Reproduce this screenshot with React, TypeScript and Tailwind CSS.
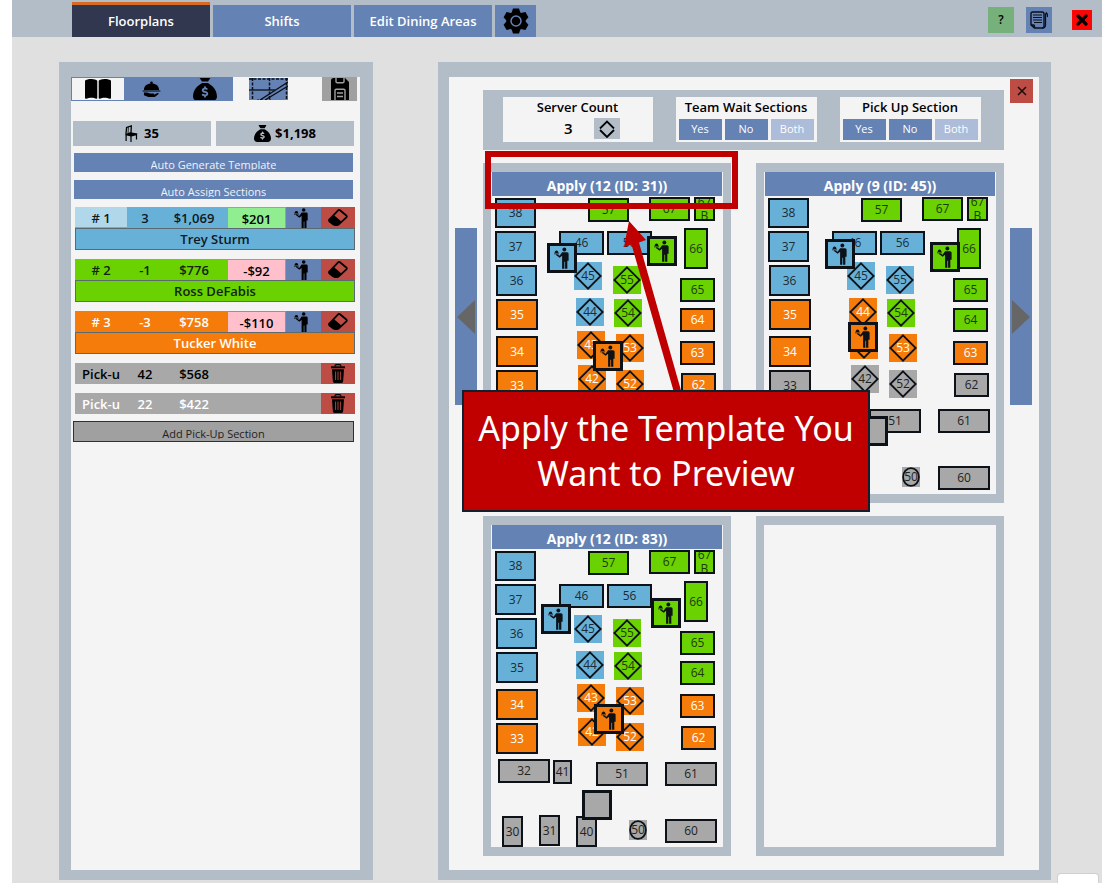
import { useState } from "react";
import type { ReactNode } from "react";
import { FaBookOpen, FaSackDollar, FaXmark } from "react-icons/fa6";

type Fill = "blue" | "green" | "orange" | "gray";
type Shape = "rect" | "diamond" | "oval";

const FILLS: Record<Fill, string> = {
  blue: "bg-[#67b1d9] text-[#1c2b33]",
  green: "bg-[#69d200] text-[#1d3a0c]",
  orange: "bg-[#f57c0a] text-white",
  gray: "bg-[#a8a8a8] text-[#222222]",
};

function Waiter({ className }: { className: string }) {
  return (
    <svg viewBox="0 0 15 20" className={className} fill="currentColor" aria-hidden="true">
      <circle cx="9.7" cy="2" r="1.8" />
      <path d="M7.600 4.500h4.600c1 0 1.500.7 1.500 1.700v6.400h-1.200V20h-2.100v-6.400h-.7V20H7.600V8L5.300 9.800 1.800 7.100l.7-.8L5.200 8z" />
      <path d="M0 5.700h4.800v.7H0zM.6 5.300C.6 3.800 1.400 3 2.400 3s1.800.8 1.800 2.300z" />
    </svg>
  );
}

function Gear() {
  const teeth = [0, 60, 120, 180, 240, 300];
  return (
    <svg viewBox="-13 -13 26 26" className="size-[26px]" aria-hidden="true">
      {teeth.map((a) => (
        <path key={a} d="M-4.500 -8-3-12.600H3L4.500 -8z" transform={`rotate(${a})`} />
      ))}
      <circle r="9.6" />
      <circle r="5" fill="none" stroke="#6582b4" strokeWidth="1.500" />
    </svg>
  );
}

function Cloche() {
  return (
    <svg viewBox="0 0 20 18" className="h-[17px] w-[19px]" aria-hidden="true">
      <circle cx="10" cy="1.800" r="1.400" />
      <path d="M2 9.500C2 5 5.500 2.700 10 2.700S18 5 18 9.500zM.6 10h18.800v1.200H.6z" />
      <path d="M2 12.200h3.500l3 1.100h3.600c1 0 1.100 1.200.1 1.200H9l3.600.1 3.600-1.900c1.200-.5 2 .6 1 1.400L13.500 17H6.700L2 15.200z" />
    </svg>
  );
}

function MapIcon() {
  return (
    <svg viewBox="0 0 39 22" className="h-[22px] w-[39px] bg-[#6582b4]" fill="none" stroke="#0b0f1a" aria-hidden="true">
      <path d="M0 1h39M3.500 0v22M20.500 0v22M37.500 0v22" strokeWidth="1.500" strokeDasharray="3 1.500" />
      <path d="M0 12h26" strokeWidth="1.300" />
      <path d="M11 22 39 4M16 22 39 8" strokeWidth="1.400" />
      <path d="M8 22h16" strokeWidth="1" strokeDasharray="2 2" />
    </svg>
  );
}

function Floppy() {
  return (
    <svg viewBox="0 0 20 22" className="h-[22px] w-5" aria-hidden="true">
      <path d="M1 2.500C1 1 2 0 3.500 0H15l4 4v18H1z" />
      <path d="M6 0v3.500c0 .8.5 1.200 1.200 1.200h5.600c.7 0 1.200-.4 1.200-1.200V0M5 22v-9.500c0-.8.500-1.200 1.200-1.200h7.600c.7 0 1.200.4 1.200 1.200V22M7 15h6M7 18.500h6" fill="none" stroke="#a0a0a0" strokeWidth="1.400" />
    </svg>
  );
}

function Chair() {
  return (
    <svg viewBox="0 0 13 17" className="h-[17px] w-[13px]" aria-hidden="true">
      <path d="M.9 9.500 1.600 2.400 6.300.9 6 8" fill="none" stroke="#000" strokeWidth="1.300" />
      <path d="M3.400 2.200 3 9" stroke="#000" strokeWidth=".8" />
      <path d="M.4 9.300 5 7.200l7.600 1.300-1.200 1.700-5 1.400L.6 10.200z" />
      <path d="M1.100 10v6M6 10.500V17M11.500 9v5.500" stroke="#000" strokeWidth="1.200" />
    </svg>
  );
}

function Eraser() {
  return (
    <svg viewBox="0 0 20 17" className="h-[17px] w-5" aria-hidden="true">
      <path d="M12 1.300 18.300 6.500c.6.5.7 1.200.1 1.800l-7.600 7c-.6.6-1.300.7-2.100.7H6.800c-.7 0-1.200-.2-1.700-.6L1.600 12.500c-.8-.7-.8-1.500 0-2.200l8.500-8.900c.6-.6 1.300-.6 1.900-.1z" fill="none" stroke="#000" strokeWidth="1.800" />
      <path d="m5.800 5.900 7.600 6.700-3.200 3.400H6L1 11.800v-1z" />
    </svg>
  );
}

function Trash() {
  return (
    <svg viewBox="0 0 16 19" className="h-[19px] w-4" aria-hidden="true">
      <path d="M1 2.300h14v2H1z" />
      <path d="M5 2.500C5 1 5.500.7 6.500.7h3c1 0 1.500.3 1.500 1.800" fill="none" stroke="#000" strokeWidth="1.200" />
      <path d="M2 5.300h12L13.200 17c-.1 1.200-.7 2-1.800 2H4.600c-1.100 0-1.700-.8-1.800-2z" />
      <path d="M5.600 7.500v8.500M8 7.500v8.500M10.400 7.500v8.500" stroke="#bd4d44" strokeWidth=".9" />
    </svg>
  );
}

function Notes() {
  return (
    <svg viewBox="0 0 18 18" className="size-[18px]" fill="none" stroke="#0b0f1a" strokeWidth="1.400" aria-hidden="true">
      <path d="M2.500 1H12c1.200 0 2 .8 2 2v12c0 1.200-.8 2-2 2H4.500L1 14V2.500C1 1.600 1.600 1 2.500 1zM1 14h2.500c.7 0 1 .4 1 1v2" />
      <path d="M3 4h9M3 6.500h9M3 9h9M4 11.500h8" strokeWidth="1.200" />
      <path d="M12 17c2.500 0 3.500-1 3.500-3V3.500L16.300 2l1.200 1.500V6" strokeWidth="1.300" />
    </svg>
  );
}

interface TableSpec {
  id: string;
  x: number;
  y: number;
  w: number;
  h: number;
  shape?: Shape;
}

const TABLES: TableSpec[] = [
  { id: "38", x: 4, y: 2, w: 41, h: 30 },
  { id: "37", x: 4, y: 35, w: 41, h: 31 },
  { id: "36", x: 5, y: 69, w: 41, h: 31 },
  { id: "35", x: 5, y: 103, w: 42, h: 31 },
  { id: "34", x: 5, y: 140, w: 42, h: 31 },
  { id: "33", x: 5, y: 174, w: 42, h: 31 },
  { id: "57", x: 97, y: 2, w: 41, h: 24 },
  { id: "67", x: 158, y: 1, w: 41, h: 24 },
  { id: "67 B", x: 203, y: 1, w: 21, h: 24 },
  { id: "46", x: 68, y: 35, w: 45, h: 24 },
  { id: "56", x: 116, y: 35, w: 45, h: 24 },
  { id: "66", x: 193, y: 32, w: 24, h: 41 },
  { id: "65", x: 189, y: 82, w: 35, h: 24 },
  { id: "64", x: 189, y: 112, w: 35, h: 24 },
  { id: "63", x: 189, y: 145, w: 35, h: 24 },
  { id: "62", x: 190, y: 177, w: 35, h: 24 },
  { id: "45", x: 83, y: 66, w: 28, h: 28, shape: "diamond" },
  { id: "55", x: 122, y: 70, w: 28, h: 28, shape: "diamond" },
  { id: "44", x: 85, y: 102, w: 28, h: 28, shape: "diamond" },
  { id: "54", x: 123, y: 103, w: 28, h: 28, shape: "diamond" },
  { id: "43", x: 86, y: 135, w: 28, h: 28, shape: "diamond" },
  { id: "42", x: 87, y: 169, w: 28, h: 28, shape: "diamond" },
  { id: "53", x: 125, y: 138, w: 28, h: 28, shape: "diamond" },
  { id: "52", x: 125, y: 174, w: 28, h: 28, shape: "diamond" },
  { id: "32", x: 7, y: 210, w: 52, h: 24 },
  { id: "41", x: 62, y: 211, w: 19, h: 24 },
  { id: "51", x: 105, y: 213, w: 52, h: 24 },
  { id: "61", x: 174, y: 213, w: 52, h: 24 },
  { id: "30", x: 11, y: 267, w: 21, h: 31 },
  { id: "31", x: 48, y: 266, w: 21, h: 31 },
  { id: "40", x: 85, y: 267, w: 21, h: 31 },
  { id: "50", x: 138, y: 271, w: 18, h: 20, shape: "oval" },
  { id: "60", x: 174, y: 270, w: 52, h: 24 },
];

interface Template {
  title: string;
  sections: Partial<Record<Fill, string[]>>;
  servers: { x: number; y: number; fill: Fill }[];
}

const TEMPLATES: Template[] = [
  {
    title: "Apply (12 (ID: 31))",
    sections: {
      blue: ["38", "37", "36", "46", "56", "45", "44"],
      green: ["57", "67", "67 B", "66", "65", "55", "54"],
      orange: ["35", "34", "33", "64", "63", "62", "43", "42", "53", "52"],
    },
    servers: [
      { x: 56, y: 47, fill: "blue" },
      { x: 156, y: 40, fill: "green" },
      { x: 102, y: 145, fill: "orange" },
      { x: 91, y: 241, fill: "gray" },
    ],
  },
  {
    title: "Apply (9 (ID: 45))",
    sections: {
      blue: ["38", "37", "36", "46", "56", "45", "55"],
      green: ["57", "67", "67 B", "66", "65", "64", "54"],
      orange: ["35", "34", "63", "44", "43", "53"],
    },
    servers: [
      { x: 61, y: 43, fill: "blue" },
      { x: 166, y: 46, fill: "green" },
      { x: 84, y: 126, fill: "orange" },
      { x: 94, y: 220, fill: "gray" },
    ],
  },
  {
    title: "Apply (12 (ID: 83))",
    sections: {
      blue: ["38", "37", "36", "35", "46", "56", "45", "44"],
      green: ["57", "67", "67 B", "66", "65", "64", "55", "54"],
      orange: ["34", "33", "63", "62", "43", "42", "53", "52"],
    },
    servers: [
      { x: 50, y: 55, fill: "blue" },
      { x: 160, y: 49, fill: "green" },
      { x: 103, y: 155, fill: "orange" },
      { x: 91, y: 241, fill: "gray" },
    ],
  },
];

function fillFor(t: Template, id: string): Fill {
  const order: Fill[] = ["blue", "green", "orange"];
  return order.find((f) => t.sections[f]?.includes(id)) ?? "gray";
}

function FloorTable({ spec, fill }: { spec: TableSpec; fill: Fill }) {
  const shape = spec.shape ?? "rect";
  return (
    <div
      className={`absolute flex items-center justify-center overflow-hidden text-center text-xs leading-[14px] ${FILLS[fill]} ${shape === "rect" ? "border-2 border-[#0c1218]" : ""}`}
      style={{ left: spec.x, top: spec.y, width: spec.w, height: spec.h }}
    >
      {shape === "diamond" && (
        <svg viewBox="0 0 28 28" className="absolute inset-0 size-full" fill="none" stroke="#0c1218" strokeWidth="1.800" aria-hidden="true">
          <path d="M14 1.300 26.700 14 14 26.700 1.300 14z" />
        </svg>
      )}
      {shape === "oval" && (
        <svg viewBox="0 0 18 20" className="absolute inset-0 size-full" fill="none" stroke="#0c1218" strokeWidth="1.800" aria-hidden="true">
          <ellipse cx="9" cy="10" rx="7.900" ry="8.900" />
        </svg>
      )}
      <span>{spec.id}</span>
    </div>
  );
}

function TemplateCard({ template }: { template?: Template }) {
  return (
    <section className="h-[340px] border-x-8 border-y-9 border-[#b2bdc8] bg-[#f4f4f4]">
      {template && (
        <>
          <button className="mx-px flex h-6 w-[230px] items-center justify-center bg-[#6582b4] pt-1 text-sm leading-5 font-bold text-white">
            {template.title}
          </button>
          <div className="relative h-[298px]">
            {TABLES.map((s) => (
              <FloorTable key={s.id} spec={s} fill={fillFor(template, s.id)} />
            ))}
            {template.servers.map((s) => (
              <div
                key={s.fill}
                className={`absolute flex size-[30px] items-center justify-center border-3 border-[#0c1218] ${FILLS[s.fill]}`}
                style={{ left: s.x, top: s.y }}
              >
                {s.fill !== "gray" && <Waiter className="h-[22px] w-4 text-[#0c1218]" />}
              </div>
            ))}
          </div>
        </>
      )}
    </section>
  );
}

function Choice({ title, width }: { title: string; width: string }) {
  return (
    <fieldset className={`h-[45px] bg-[#f4f4f4] px-[3px] ${width}`}>
      <legend className="sr-only">{title}</legend>
      <div className="h-[22px] text-center text-[13px] leading-[21px] font-semibold">{title}</div>
      <div className="flex gap-[3px] text-[11px] text-white">
        <button className="h-[21px] flex-1 bg-[#6582b4]">Yes</button>
        <button className="h-[21px] flex-1 bg-[#6582b4]">No</button>
        <button className="h-[21px] flex-1 bg-[#adbcd8]">Both</button>
      </div>
    </fieldset>
  );
}

function ClippedButton({ children, className }: { children: ReactNode; className: string }) {
  return (
    <button className={`flex items-start justify-center pt-0.5 ${className}`}>
      <span className="h-[15px] overflow-hidden leading-5">{children}</span>
    </button>
  );
}

interface SectionInfo {
  label: string;
  diff: string;
  sales: string;
  delta: string;
  name: string;
  fill: string;
  labelFill: string;
  deltaFill: string;
}

const SECTIONS: SectionInfo[] = [
  { label: "# 1", diff: "3", sales: "$1,069", delta: "$201", name: "Trey Sturm", fill: "bg-[#67b1d9] text-[#101820]", labelFill: "bg-[#b0d7ea]", deltaFill: "bg-[#90ee90]" },
  { label: "# 2", diff: "-1", sales: "$776", delta: "-$92", name: "Ross DeFabis", fill: "bg-[#69d200] text-[#12240a]", labelFill: "", deltaFill: "bg-[#ffc0cb]" },
  { label: "# 3", diff: "-3", sales: "$758", delta: "-$110", name: "Tucker White", fill: "bg-[#f57c0a] text-white", labelFill: "", deltaFill: "bg-[#ffc0cb]" },
];

function SectionRow({ s }: { s: SectionInfo }) {
  return (
    <div className={`text-center text-[13px] font-semibold ${s.fill}`}>
      <div className="flex h-[21px] leading-[22px]">
        <span className={`mb-px w-[52px] ${s.labelFill}`}>{s.label}</span>
        <span className="w-9">{s.diff}</span>
        <span className="w-[62px]">{s.sales}</span>
        <span className={`mt-px mr-px ml-auto w-[57px] text-black ${s.deltaFill}`}>{s.delta}</span>
        <button aria-label={`Servers for ${s.name}`} className="flex w-[35px] items-center justify-center bg-[#6582b4] pr-1 text-black">
          <Waiter className="h-5 w-[15px]" />
        </button>
        <button aria-label={`Clear ${s.name}`} className="flex w-[34px] items-center justify-center bg-[#bd4d44]">
          <Eraser />
        </button>
      </div>
      <div className="h-[22px] border border-[#5c6a70] leading-[21px]">{s.name}</div>
    </div>
  );
}

function PickupRow({ count, sales, tone }: { count: string; sales: string; tone: string }) {
  return (
    <div className={`flex h-[21px] bg-[#a8a8a8] text-center text-[13px] leading-[22px] font-semibold ${tone}`}>
      <span className="w-[52px] whitespace-nowrap">Pick-u</span>
      <span className="w-9">{count}</span>
      <span className="w-[62px]">{sales}</span>
      <button aria-label={`Delete pick-up section ${count}`} className="ml-auto flex w-[34px] items-center justify-center bg-[#bd4d44]">
        <Trash />
      </button>
    </div>
  );
}

function Header() {
  return (
    <header className="flex h-[37px] items-end justify-between bg-[#b2bdc8] pr-2.5 pl-[60px]">
      <nav className="flex items-end gap-[3px] text-[13px] font-semibold text-white">
        <button className="h-[35px] w-[138px] border-t-3 border-[#d96a24] bg-[#30374f] pt-0.5">Floorplans</button>
        <button className="h-8 w-[138px] bg-[#6582b4] pt-0.5">Shifts</button>
        <button className="h-8 w-[138px] bg-[#6582b4] pt-0.5">Edit Dining Areas</button>
        <button aria-label="Settings" className="flex h-8 w-[41px] items-center justify-center bg-[#6582b4]">
          <Gear />
        </button>
      </nav>
      <div className="flex items-center self-center pt-[3px]">
        <button aria-label="Help" className="size-[26px] bg-[#76b07a] text-xs font-semibold">?</button>
        <button aria-label="Notes" className="ml-3 flex size-[26px] items-center justify-center bg-[#6582b4]">
          <Notes />
        </button>
        <button aria-label="Close" className="ml-5 flex size-5 items-center justify-center bg-[#fb0505]">
          <FaXmark className="size-4" strokeWidth={40} stroke="black" />
        </button>
      </div>
    </header>
  );
}

function LeftPanel() {
  return (
    <aside className="w-[314px] shrink-0 border-t-15 border-r-13 border-b-10 border-l-12 border-[#b2bdc8] bg-[#f4f4f4]">
      <div className="flex h-6 items-start">
        <div className="flex h-6 border border-[#6582b4]">
          <button aria-label="Overview" className="flex w-[52px] items-center justify-center">
            <FaBookOpen className="size-[26px]" />
          </button>
          <button aria-label="Service" className="flex w-[54px] items-center justify-center bg-[#6582b4]">
            <Cloche />
          </button>
          <button aria-label="Sales" className="flex w-[54px] items-center justify-center overflow-hidden bg-[#6582b4]">
            <FaSackDollar className="size-6 shrink-0" />
          </button>
        </div>
        <button aria-label="Section lines" className="mx-4 mt-px">
          <MapIcon />
        </button>
        <button aria-label="Save" className="mr-[3px] ml-auto flex h-6 w-[35px] items-center justify-center bg-[#a0a0a0]">
          <Floppy />
        </button>
      </div>

      <div className="mt-5 mr-1.5 ml-0.5 flex gap-[5px] text-[13px] font-bold">
        <div className="flex h-[25px] flex-1 items-center justify-center gap-1.5 bg-[#b2bdc8]">
          <Chair /> 35
        </div>
        <div className="flex h-[25px] flex-1 items-center justify-center gap-1 bg-[#b2bdc8]">
          <FaSackDollar className="size-[17px]" /> $1,198
        </div>
      </div>
      <div className="mt-[7px] mr-[7px] ml-[3px] flex flex-col gap-2 text-[11px]">
        <ClippedButton className="h-[19px] bg-[#6582b4] text-[#eef2fa]">Auto Generate Template</ClippedButton>
        <ClippedButton className="h-[19px] bg-[#6582b4] text-[#eef2fa]">Auto Assign Sections</ClippedButton>
      </div>
      <div className="mt-2 mr-[5px] ml-1 flex flex-col gap-[9px]">
        {SECTIONS.map((s) => (
          <SectionRow key={s.label} s={s} />
        ))}
        <PickupRow count="42" sales="$568" tone="text-black" />
        <PickupRow count="22" sales="$422" tone="text-white" />
      </div>
      <ClippedButton className="mt-[7px] ml-0.5 h-[21px] w-[281px] border border-[#303030] bg-[#a0a0a0] text-[11px] text-[#222222]">
        Add Pick-Up Section
      </ClippedButton>
    </aside>
  );
}

function NavButton({ side }: { side: "left" | "right" }) {
  return (
    <button
      aria-label={side === "left" ? "Previous templates" : "Next templates"}
      className="flex h-[177px] w-[22px] items-center justify-center bg-[#6582b4]"
    >
      <svg viewBox="0 0 18 34" className="h-[34px] w-[18px]" fill="#666" aria-hidden="true">
        <path d={side === "left" ? "M18 0v34L0 17z" : "M0 0v34l18-17z"} />
      </svg>
    </button>
  );
}

function Annotation() {
  return (
    <>
      <div className="absolute -top-3 left-0.5 h-[58px] w-[253px] border-6 border-[#c00000]" />
      <svg viewBox="0 0 60 175" className="absolute top-[58px] left-[141px] h-[175px] w-[60px]" fill="#c00000" aria-hidden="true">
        <path d="M5 0 0 26l7.500-2.500L51 175l7-2L15 21.500l7-2.500z" />
      </svg>
      <div className="absolute top-[227px] -left-[21px] flex h-[122px] w-[408px] items-center justify-center border-2 border-[#10202c] bg-[#c00000] text-center font-['Noto_Sans',sans-serif] text-[34px] leading-[45px] text-white">
        <p className="whitespace-nowrap">
          Apply the Template You
          <br />
          Want to Preview
        </p>
      </div>
    </>
  );
}

function TemplatePanel() {
  const [count, setCount] = useState(3);
  return (
    <main className="flex flex-1 border-t-15 border-r-12 border-b-10 border-l-11 border-[#b2bdc8] bg-[#f4f4f4]">
      <div className="w-[34px] shrink-0 pt-[151px] pl-1.5">
        <NavButton side="left" />
      </div>
      <div className="flex-1 pt-[13px] pb-3.5">
        <div className="flex h-[60px] justify-center gap-[23px] bg-[#b2bdc8] pt-[7px] pr-1">
          <div className="h-[45px] w-[150px] bg-[#f4f4f4]">
            <div className="text-center text-[13px] leading-[21px] font-semibold">Server Count</div>
            <div className="flex justify-end pr-[33px]">
              <output className="mr-[21px] text-[15px] leading-[21px] font-semibold">{count}</output>
              <div className="flex w-[26px] flex-col items-center bg-[#b2bdc8]">
                <button aria-label="Increase" onClick={() => setCount(count + 1)} className="flex h-[11px] items-end">
                  <svg viewBox="0 0 16 9" className="h-[9px] w-4" fill="none" stroke="#000" strokeWidth="1.800">
                    <path d="m1 8.500 7-7 7 7" />
                  </svg>
                </button>
                <button aria-label="Decrease" onClick={() => setCount(count - 1)} className="flex h-2.5">
                  <svg viewBox="0 0 16 9" className="h-[9px] w-4" fill="none" stroke="#000" strokeWidth="1.800">
                    <path d="m1 1 7 7 7-7" />
                  </svg>
                </button>
              </div>
            </div>
          </div>
          <Choice title="Team Wait Sections" width="w-[141px]" />
          <Choice title="Pick Up Section" width="w-[141px]" />
        </div>
        <div className="relative mx-auto mt-[13px] grid w-[521px] grid-cols-[248px_248px] justify-between gap-y-[13px]">
          {TEMPLATES.map((t) => (
            <TemplateCard key={t.title} template={t} />
          ))}
          <TemplateCard />
          <Annotation />
        </div>
      </div>
      <div className="w-[35px] shrink-0 pt-0.5 pl-1.5">
        <button aria-label="Close templates" className="mb-[125px] flex h-6 w-[23px] items-center justify-center bg-[#bd4d44]">
          <svg viewBox="0 0 10 10" className="size-2.5" stroke="#1a0c0a" strokeWidth="1.500" aria-hidden="true">
            <path d="m1 1 8 8M9 1 1 9" />
          </svg>
        </button>
        <NavButton side="right" />
      </div>
    </main>
  );
}

export default function App() {
  return (
    <div className="min-h-screen bg-white px-3 font-['Open_Sans','Noto_Sans',sans-serif] text-black">
      <div className="relative flex min-h-screen flex-col overflow-hidden bg-[#e0e0e0]">
        <Header />
        <div className="flex flex-1 gap-[65px] pt-[25px] pr-[51px] pb-[3px] pl-[47px]">
          <LeftPanel />
          <TemplatePanel />
        </div>
        <div className="absolute right-[3px] bottom-0 h-2.5 w-[42px] rounded-t border border-b-0 border-[#d0d0d0] bg-white" />
      </div>
    </div>
  );
}
